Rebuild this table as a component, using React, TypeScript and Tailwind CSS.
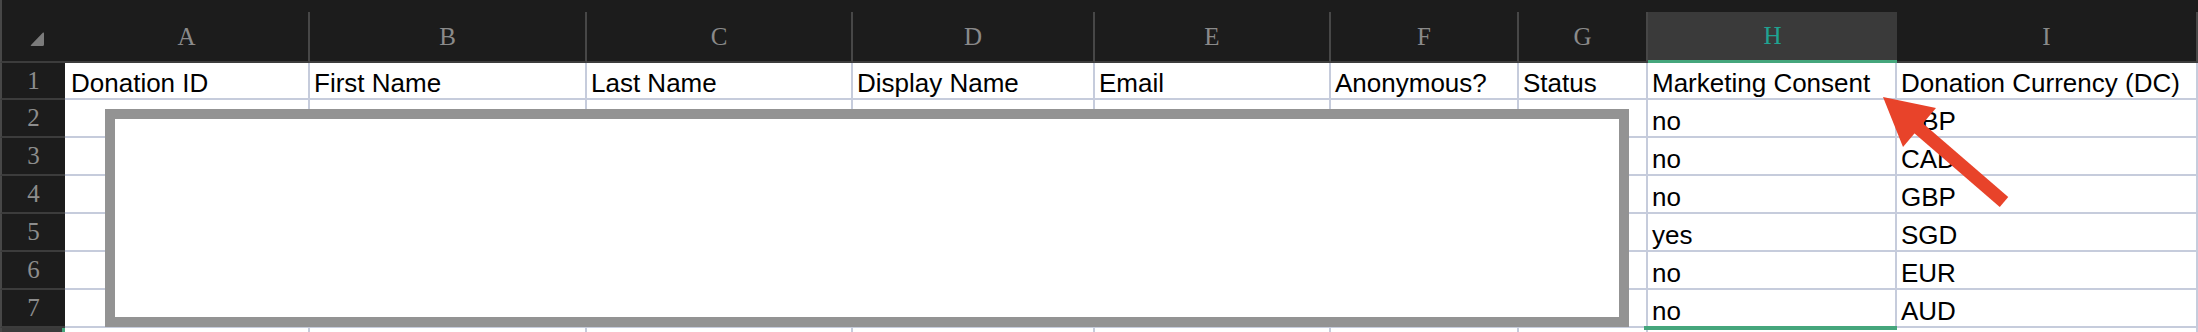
const cols = ["A", "B", "C", "D", "E", "F", "G", "H", "I"];
const titles = [
  "Donation ID",
  "First Name",
  "Last Name",
  "Display Name",
  "Email",
  "Anonymous?",
  "Status",
  "Marketing Consent",
  "Donation Currency (DC)",
];
const consent = ["no", "no", "no", "yes", "no", "no"];
const currency = ["GBP", "CAD", "GBP", "SGD", "EUR", "AUD"];

const gridCols =
  "grid grid-cols-[65px_245px_277px_266px_242px_236px_188px_129px_249px_1fr]";

const RowNum = ({ n, h }: { n: number; h: string }) => (
  <div
    className={`${h} flex items-center justify-center bg-[#1c1c1c] border-l-2 border-l-[#474747] border-b-2 border-b-[#3c3c3c] text-[25px] text-[#8d8d8d] [font-family:'Liberation_Serif',serif]`}
  >
    {n}
  </div>
);

const Cell = ({ children, h, pl = "pl-[4px]" }: { children?: string; h: string; pl?: string }) => (
  <div
    className={`${h} ${pl} flex items-end overflow-hidden whitespace-nowrap border-b-2 border-r-2 border-[#c6ccdc] text-[26px] leading-[29px] text-black`}
  >
    {children}
  </div>
);

export default function App() {
  return (
    <div className="relative w-[2198px] h-[332px] overflow-hidden bg-white [font-family:'Liberation_Sans',Arial,sans-serif]">
      {/* column letters */}
      <div className={`${gridCols} h-[63px] bg-[#1c1c1c] pt-[12px]`}>
        <div className="-mt-[12px] border-l-2 border-[#474747] border-b-2 border-b-[#3c3c3c] flex items-center justify-center">
          <svg width="16" height="16" viewBox="0 0 16 16" className="mt-[17px] ml-[6px]">
            <path d="M14 1.5 Q15 1 15 2.5 L15 13.5 Q15 15 13.5 15 L2.5 15 Q1 15 2 14 Z" fill="#7b7b7b" />
          </svg>
        </div>
        {cols.map((c) => (
          <div
            key={c}
            className={
              c === "H"
                ? "flex items-center justify-center bg-[#3a3a3a] border-b-[3px] border-[#45a67c] text-[25px] text-[#1fa392] [font-family:'Liberation_Serif',serif]"
                : "flex items-center justify-center border-r-2 border-r-[#474747] border-b-2 border-b-[#3c3c3c] text-[25px] text-[#8a8a8a] [font-family:'Liberation_Serif',serif]"
            }
          >
            {c}
          </div>
        ))}
      </div>

      {/* row 1 */}
      <div className={gridCols}>
        <RowNum n={1} h="h-[37px]" />
        {titles.map((t, i) => (
          <Cell key={t} h="h-[37px]" pl={i === 0 ? "pl-[6px]" : "pl-[4px]"}>
            {t}
          </Cell>
        ))}
      </div>

      {/* rows 2-7 */}
      {consent.map((v, r) => (
        <div key={r} className={gridCols}>
          <RowNum n={r + 2} h="h-[38px]" />
          {cols.map((c) => (
            <Cell key={c} h="h-[38px]">
              {c === "H" ? v : c === "I" ? currency[r] : undefined}
            </Cell>
          ))}
        </div>
      ))}

      {/* row 8 peek */}
      <div className={gridCols}>
        <div className="h-[4px] flex">
          <div className="flex-1 bg-[#3a3a3a] border-l-2 border-[#474747]" />
          <div className="w-[3px] bg-[#45a67c]" />
        </div>
        {cols.map((c) => (
          <div key={c} className={c === "H" ? "h-[4px] -mt-[2px] -ml-[4px] bg-[#45a67c]" : "h-[4px] border-r-2 border-[#c6ccdc]"} />
        ))}
      </div>

      {/* redaction box */}
      <div className="absolute left-[105px] top-[109px] w-[1524px] h-[218px] border-[10px] border-[#939393] bg-white" />

      {/* annotation arrow */}
      <svg className="absolute left-0 top-0" width="2198" height="332">
        <line x1="1916" y1="126" x2="2004" y2="202" stroke="#e8432a" strokeWidth="13" />
        <polygon points="1883,97 1903,147 1936,108" fill="#e8432a" />
      </svg>
    </div>
  );
}
